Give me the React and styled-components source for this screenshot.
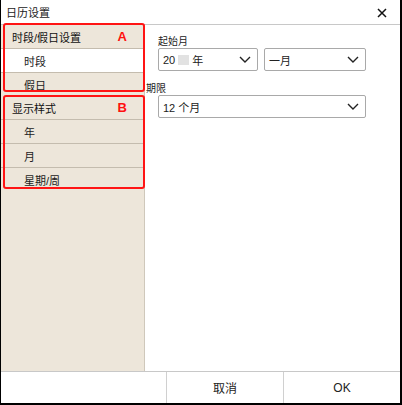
import React from "react";
import styled, { createGlobalStyle } from "styled-components";

const GlobalStyle = createGlobalStyle`
  html, body {
    margin: 0;
    padding: 0;
    background: #fff;
  }
  body {
    font-family: "Liberation Sans", "Noto Sans CJK SC", sans-serif;
    color: #222;
  }
`;

const sidebarGroups = [
  {
    title: "时段/假日设置",
    mark: "A",
    items: [
      { label: "时段", active: true },
      { label: "假日" },
    ],
    box: { top: -2, bottom: 4 },
  },
  {
    title: "显示样式",
    mark: "B",
    items: [{ label: "年" }, { label: "月" }, { label: "星期/周" }],
    box: { top: -1, bottom: 2 },
  },
];

function Chevron() {
  return (
    <svg width="12" height="7" viewBox="0 0 12 7">
      <path d="M1 1 L6 6 L11 1" fill="none" stroke="#222" strokeWidth="1.4" />
    </svg>
  );
}

function CloseIcon() {
  return (
    <svg width="10" height="10" viewBox="0 0 10 10">
      <path d="M1 1 L9 9 M9 1 L1 9" stroke="#111" strokeWidth="1.5" />
    </svg>
  );
}

export default function App() {
  return (
    <>
      <GlobalStyle />
      <Window>
        <TitleBar>
          <Title>日历设置</Title>
          <CloseButton>
            <CloseIcon />
          </CloseButton>
        </TitleBar>
        <Body>
          <Sidebar>
            {sidebarGroups.map((group) => (
              <Group key={group.mark}>
                <GroupHeader>
                  <span>{group.title}</span>
                  <Mark>{group.mark}</Mark>
                </GroupHeader>
                {group.items.map((item, i) => (
                  <Item
                    key={item.label}
                    $active={item.active}
                    $last={i === group.items.length - 1}
                  >
                    {item.label}
                  </Item>
                ))}
                <Highlight $top={group.box.top} $bottom={group.box.bottom} />
              </Group>
            ))}
          </Sidebar>
          <Content>
            <Field>
              <Label>起始月</Label>
              <SelectRow>
                <Select $width={100}>
                  <SelectText>
                    20<Redacted />年
                  </SelectText>
                  <Chevron />
                </Select>
                <Select $width={102}>
                  <SelectText>一月</SelectText>
                  <Chevron />
                </Select>
              </SelectRow>
            </Field>
            <Field>
              <Label $shift={-12}>期限</Label>
              <Select $width={208}>
                <SelectText>12 个月</SelectText>
                <Chevron />
              </Select>
            </Field>
          </Content>
        </Body>
        <Footer>
          <FooterSpacer />
          <FooterButton>取消</FooterButton>
          <FooterButton>OK</FooterButton>
        </Footer>
      </Window>
    </>
  );
}

const Window = styled.div`
  box-sizing: border-box;
  width: 402px;
  height: 405px;
  display: flex;
  flex-direction: column;
  border-left: 1px solid #000;
  border-right: 2px solid #000;
  border-bottom: 2px solid #000;
  background: #fff;
  overflow: hidden;
`;

const TitleBar = styled.div`
  height: 24px;
  flex-shrink: 0;
  display: flex;
  align-items: center;
  justify-content: space-between;
  border-bottom: 1px solid #c8c8c8;
  padding: 0 13px 0 5px;
`;

const Title = styled.div`
  font-size: 11px;
  color: #222;
`;

const CloseButton = styled.div`
  display: flex;
  align-items: center;
  margin-top: 1px;
`;

const Body = styled.div`
  flex: 1;
  display: flex;
  min-height: 0;
`;

const Sidebar = styled.div`
  width: 143px;
  flex-shrink: 0;
  background: #ede6da;
  border-right: 1px solid #cfc8bb;
  display: flex;
  flex-direction: column;
`;

const Group = styled.div`
  position: relative;
`;

const GroupHeader = styled.div`
  height: 23px;
  display: flex;
  align-items: center;
  justify-content: space-between;
  padding: 0 17px 0 11px;
  border-bottom: 1px solid #c4bcae;
  font-size: 11px;
  color: #111;
`;

const Mark = styled.span`
  font-family: "Liberation Sans", Arial, sans-serif;
  font-weight: bold;
  font-size: 13px;
  color: #ff1010;
`;

const Item = styled.div`
  height: 23px;
  display: flex;
  align-items: center;
  padding-left: 23px;
  font-size: 11px;
  color: #222;
  background: ${(p) => (p.$active ? "#fff" : "transparent")};
  border-bottom: ${(p) => (p.$last ? "none" : "1px solid #c4bcae")};
`;

const Highlight = styled.div`
  position: absolute;
  left: 2px;
  right: -1px;
  top: ${(p) => p.$top}px;
  bottom: ${(p) => p.$bottom}px;
  border: 2px solid #ff1414;
  border-radius: 3px;
  pointer-events: none;
`;

const Content = styled.div`
  flex: 1;
  padding: 11px 0 0 13px;
  display: flex;
  flex-direction: column;
  gap: 12px;
`;

const Field = styled.div`
  display: flex;
  flex-direction: column;
`;

const Label = styled.div`
  font-size: 10px;
  line-height: 11px;
  margin-bottom: 1px;
  margin-left: ${(p) => p.$shift || 0}px;
  color: #222;
`;

const SelectRow = styled.div`
  display: flex;
  gap: 6px;
`;

const Select = styled.div`
  box-sizing: border-box;
  width: ${(p) => p.$width}px;
  height: 23px;
  border: 1px solid #a9a9a9;
  border-radius: 2px;
  display: flex;
  align-items: center;
  justify-content: space-between;
  padding: 0 6px 0 4px;
  background: #fff;
`;

const SelectText = styled.span`
  display: flex;
  align-items: center;
  font-size: 11px;
  color: #222;
`;

const Redacted = styled.span`
  display: inline-block;
  width: 11px;
  height: 10px;
  background: #e2e2e2;
  margin: 0 3px 0 3px;
`;

const Footer = styled.div`
  height: 31px;
  flex-shrink: 0;
  display: flex;
  border-top: 1px solid #c8c8c8;
`;

const FooterSpacer = styled.div`
  width: 165px;
  border-right: 1px solid #d0d0d0;
`;

const FooterButton = styled.div`
  flex: 1;
  display: flex;
  align-items: center;
  justify-content: center;
  font-size: 12px;
  color: #222;
  & + & {
    border-left: 1px solid #d0d0d0;
  }
`;
